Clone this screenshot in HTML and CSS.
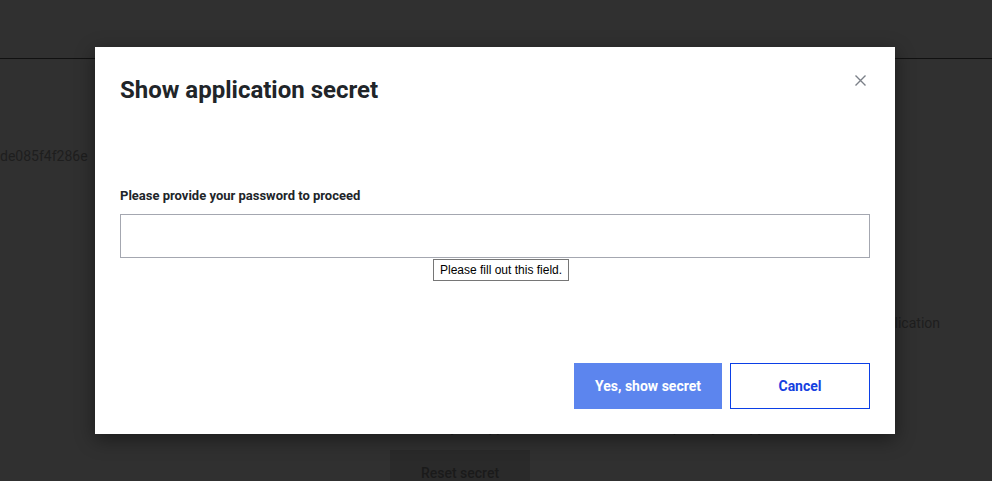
FILE: index.html
```html
<!DOCTYPE html>
<html lang="en">
<head>
<meta charset="utf-8">
<title>Show application secret</title>
<link rel="stylesheet" href="styles.css">
</head>
<body>
<div class="page">
  <header class="topbar"></header>
  <main class="content">
    <div class="secret-row">de085f4f286e</div>
    <div class="hint-row">Share the secret only with a trusted application</div>
    <div class="warn-row">If the secret of your application leaks, reset it and update your app</div>
    <div class="reset-row"><button class="reset-btn" type="button">Reset secret</button></div>
  </main>
</div>

<div class="modal" role="dialog" aria-labelledby="modal-title">
  <div class="modal-header">
    <h2 id="modal-title" class="modal-title">Show application secret</h2>
    <button class="close-btn" type="button" aria-label="Close">
      <svg width="11" height="11" viewBox="0 0 11 11"><path d="M0.5 0.5 L10.5 10.5 M10.5 0.5 L0.5 10.5" stroke="#7b8088" stroke-width="1.4" fill="none"/></svg>
    </button>
  </div>
  <div class="modal-body">
    <label class="field-label" for="pwd">Please provide your password to proceed</label>
    <div class="field-wrap">
      <input id="pwd" class="field-input" type="password">
      <div class="tooltip">Please fill out this field.</div>
    </div>
  </div>
  <div class="modal-footer">
    <button class="btn btn-primary" type="button">Yes, show secret</button>
    <button class="btn btn-outline" type="button">Cancel</button>
  </div>
</div>
</body>
</html>
```
FILE: styles.css
```css
* { box-sizing: border-box; }
html, body {
  margin: 0;
  padding: 0;
  width: 992px;
  height: 481px;
  overflow: hidden;
  background: #303030;
  font-family: Roboto, "Liberation Sans", sans-serif;
}
.page {
  width: 992px;
  height: 481px;
  display: flex;
  flex-direction: column;
  overflow: hidden;
}
.topbar {
  height: 59px;
  border-bottom: 1px solid #111;
  flex: none;
}
.content {
  display: flex;
  flex-direction: column;
  color: #1e1e1e;
  font-size: 14px;
  line-height: 20px;
}
.secret-row {
  margin-top: 87px;
  padding-left: 0;
}
.hint-row {
  margin-top: 147px;
  text-align: right;
  padding-right: 52px;
}
.warn-row {
  margin-top: 84px;
  text-align: center;
  padding-left: 130px;
}
.reset-row {
  margin-top: 13px;
  padding-left: 390px;
}
.reset-btn {
  width: 140px;
  height: 46px;
  background: #2a2a2a;
  border: none;
  color: #1a1a1a;
  font-family: Roboto, sans-serif;
  font-weight: 500;
  font-size: 14px;
  padding: 0;
}

.modal {
  position: absolute;
  left: 95px;
  top: 47px;
  width: 800px;
  height: 387px;
  background: #fff;
  box-shadow: 0 5px 18px rgba(0,0,0,0.45);
  display: flex;
  flex-direction: column;
  padding: 0 25px 25px 25px;
}
.modal-header {
  display: flex;
  justify-content: space-between;
  align-items: flex-start;
  padding-top: 29px;
}
.modal-title {
  margin: 0;
  font-size: 24px;
  line-height: 29px;
  font-weight: 700;
  color: #212529;
}
.close-btn {
  background: none;
  border: none;
  padding: 0;
  margin-top: -1px;
  margin-right: 4px;
  width: 11px;
  height: 11px;
  display: flex;
}
.modal-body {
  padding-top: 83px;
  display: flex;
  flex-direction: column;
}
.field-label {
  font-size: 13px;
  line-height: 16px;
  font-weight: 700;
  color: #212529;
  margin-bottom: 10px;
}
.field-wrap {
  position: relative;
}
.field-input {
  display: block;
  width: 750px;
  height: 44px;
  border: 1px solid #a4a7b0;
  border-radius: 0;
  background: #fff;
  outline: none;
}
.tooltip {
  position: absolute;
  left: 313px;
  top: 45px;
  height: 22px;
  padding: 0 6px;
  border: 1px solid #767676;
  background: #fff;
  color: #000;
  font-family: "Liberation Sans", Arial, sans-serif;
  font-size: 12px;
  line-height: 20px;
  white-space: nowrap;
}
.modal-footer {
  margin-top: auto;
  display: flex;
  justify-content: flex-end;
  gap: 8px;
}
.btn {
  height: 46px;
  font-family: Roboto, sans-serif;
  font-weight: 700;
  font-size: 14px;
  padding: 0;
}
.btn-primary {
  width: 148px;
  background: #5c85ee;
  border: none;
  color: #fff;
}
.btn-outline {
  width: 140px;
  background: #fff;
  border: 1px solid #0b3fe6;
  color: #1540e0;
}
```
